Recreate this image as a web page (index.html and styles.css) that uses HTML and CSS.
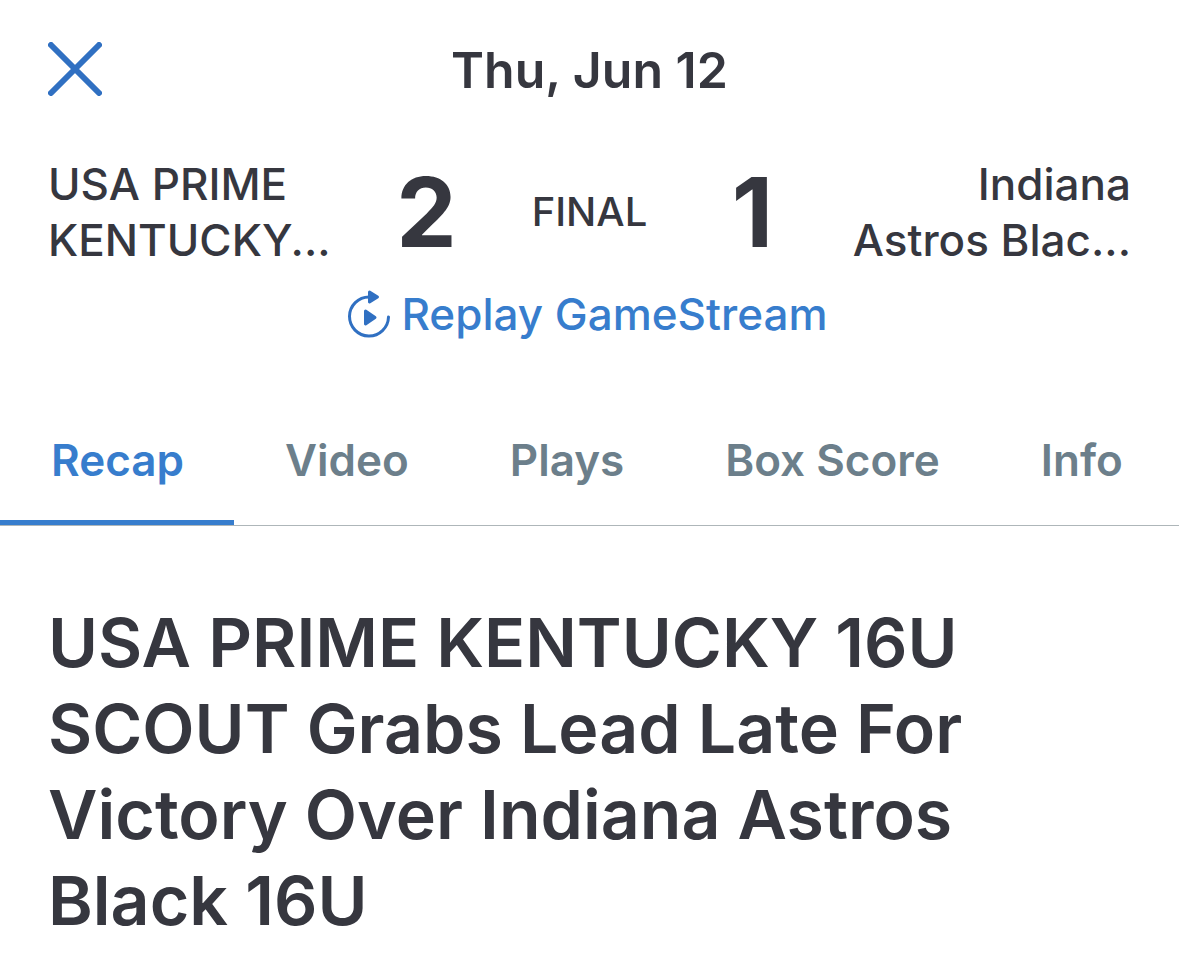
FILE: index.html
```html
<!DOCTYPE html>
<html lang="en">
<head>
<meta charset="utf-8">
<meta name="viewport" content="width=device-width, initial-scale=1">
<title>Game recap</title>
<link rel="stylesheet" href="styles.css">
</head>
<body>
<header class="topbar">
  <button class="close" type="button" aria-label="Close">
    <svg class="close-icon" viewBox="0 0 54 54" aria-hidden="true"><path d="M3 3 51 51M51 3 3 51"/></svg>
  </button>
  <h1 class="date">Thu, Jun 12</h1>
</header>
<section class="scoreboard">
  <div class="team">USA PRIME<br>KENTUCKY...</div>
  <div class="score">2</div>
  <div class="status">FINAL</div>
  <div class="score">1</div>
  <div class="team away">Indiana<br>Astros Blac...</div>
</section>
<a class="replay" href="#replay">
  <svg class="replay-icon" viewBox="0 0 44 50" aria-hidden="true"><path class="ring" d="M22 8A19.500 19.500 0 1 0 41.500 28"/><path class="fill" d="M22.500 3 30.500 8 22.500 13ZM18.500 22 28 28.500 18.500 35Z"/></svg>
  <span>Replay GameStream</span>
</a>
<nav class="tabs">
  <a class="tab active" href="#recap" aria-current="page">Recap</a>
  <a class="tab" href="#video">Video</a>
  <a class="tab" href="#plays">Plays</a>
  <a class="tab" href="#box">Box Score</a>
  <a class="tab" href="#info">Info</a>
</nav>
<main class="article">
  <h2 class="headline">USA PRIME KENTUCKY 16U SCOUT Grabs Lead Late For Victory Over Indiana Astros Black 16U</h2>
</main>
</body>
</html>
```
FILE: styles.css
```css
* { box-sizing: border-box; }
body { margin: 0; background: #fff; color: #36373f; font-family: Inter, "Liberation Sans", sans-serif; }
.topbar { display: grid; grid-template-columns: 56px 1fr 56px; align-items: center; padding: 40px 48px 0; }
.close { width: 54px; height: 60px; padding: 0 0 2px; border: 0; background: none; }
.close-icon { display: block; width: 54px; height: 54px; fill: none; stroke: #3070c2; stroke-width: 6; stroke-linecap: round; }
.date { margin: 0; text-align: center; font-size: 50px; line-height: 60px; font-weight: 600; }
.scoreboard { display: grid; grid-template-columns: 1fr 92px 234px 92px 1fr; align-items: center; padding: 56px 48px 0; }
.team { font-size: 44px; line-height: 56px; font-weight: 500; white-space: nowrap; }
.away { text-align: right; }
.score { text-align: center; font-size: 96px; line-height: 112px; font-weight: 700; }
.status { text-align: center; font-size: 40px; line-height: 56px; font-weight: 500; }
.replay { display: flex; width: fit-content; margin: 18px auto 0; padding-right: 4px; gap: 10px; align-items: center; color: #377dcd; text-decoration: none; font-size: 44px; line-height: 56px; font-weight: 500; }
.replay-icon { width: 44px; height: 50px; }
.ring { fill: none; stroke: #3070c2; stroke-width: 3; stroke-linecap: round; }
.fill { fill: #3070c2; stroke: #3070c2; stroke-width: 3; stroke-linejoin: round; }
.tabs { display: flex; margin-top: 56px; border-bottom: 1px solid #aeb6b9; }
.tab { padding: 34px 50px 32px 51px; color: #6c7f8b; text-decoration: none; white-space: nowrap; font-size: 44px; line-height: 56px; font-weight: 600; border-bottom: 5px solid transparent; }
.active { color: #377dcd; border-color: #377dcd; }
.article { padding: 73px 48px 24px; }
.headline { max-width: 960px; margin: 0; font-size: 68px; line-height: 86px; font-weight: 600; }
```
